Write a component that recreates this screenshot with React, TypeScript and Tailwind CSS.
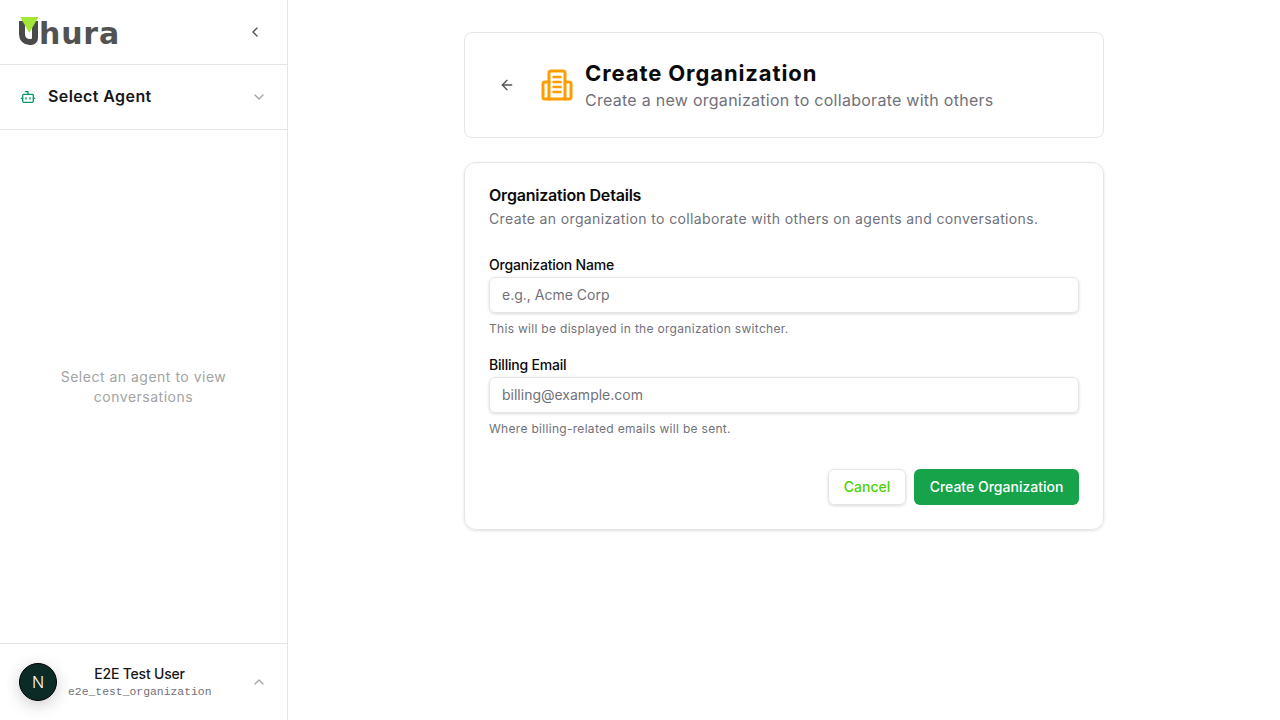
import { ArrowLeft, Bot, ChevronDown, ChevronLeft, ChevronUp } from 'lucide-react'

const font = { fontFamily: 'Inter, "Liberation Sans", sans-serif' }

const Logo = () => (
  <div className="mb-[3px] flex items-end">
    <svg width="21" height="28" viewBox="0 0 21 28" fill="none" className="shrink-0">
      <path d="M4 4v13.500a7.500 7.500 0 0 0 7.500 7.500h1.500a4 4 0 0 0 4-4V4" stroke="#4a4a4a" strokeWidth="6" />
      <path d="M2.500 0.800q0-0.800 0.800-0.800h16.400q0.800 0 0.400 0.700l-8.300 14.300q-0.500 0.800-1 0z" fill="#a3e635" />
    </svg>
    <span
      className="translate-y-[3px] text-[30px] leading-[28px] font-bold tracking-[0.8px] text-[#525252]"
      style={{ fontFamily: '"DejaVu Sans", sans-serif' }}
    >
      hura
    </span>
  </div>
)

const Field = ({ label, placeholder, hint }: { label: string; placeholder: string; hint: string }) => (
  <div>
    <label className="block text-sm leading-5 font-medium tracking-[-0.2px] text-[#0a0a0a]">{label}</label>
    <input
      placeholder={placeholder}
      className="mt-0.5 h-9 w-full rounded-md border border-[#e5e5e5] px-3 pb-px text-sm text-[#0a0a0a] shadow-[0_1px_3px_rgba(0,0,0,0.15)] outline-none placeholder:text-[#71717a]"
    />
    <p className="mt-2 text-xs leading-4 tracking-[0.3px] text-[#71717a]">{hint}</p>
  </div>
)

export default function App() {
  return (
    <div className="flex h-[720px] w-[1280px] overflow-hidden bg-white" style={font}>
      {/* Sidebar */}
      <aside className="flex w-[288px] shrink-0 flex-col border-r border-[#e5e5e5]">
        <div className="flex h-[65px] items-center justify-between border-b border-[#e5e5e5] pr-6 pl-[18px]">
          <Logo />
          <ChevronLeft size={16} className="text-[#525252]" />
        </div>
        <div className="flex h-[65px] items-center border-b border-[#e5e5e5] pr-5 pl-5">
          <Bot size={16} className="text-[#059669]" />
          <span className="ml-3 -translate-y-px flex-1 text-base font-semibold tracking-[0.4px] text-[#171717]">Select Agent</span>
          <ChevronDown size={16} className="text-[#a3a3a3]" />
        </div>
        <div className="flex flex-1 items-center justify-center px-12 text-center text-sm leading-5 tracking-[0.5px] text-[#a3a3a3]">
          Select an agent to view conversations
        </div>
        <div className="flex h-[77px] items-center border-t border-[#e5e5e5] pr-5 pl-[19px]">
          <div className="flex size-[38px] items-center justify-center rounded-full border border-black bg-[#0d2b26] text-base font-light text-white shadow-[0_4px_16px_rgba(0,0,0,0.2)]">
            N
          </div>
          <div className="ml-[11px] w-[143px] text-center">
            <div className="text-sm leading-[18px] font-medium tracking-[-0.2px] text-[#171717]">E2E Test User</div>
            <div className="mt-px text-[11.4px] leading-4 text-[#71717a]" style={{ fontFamily: '"Liberation Mono", monospace' }}>
              e2e_test_organization
            </div>
          </div>
          <ChevronUp size={16} className="ml-auto text-[#a3a3a3]" />
        </div>
      </aside>

      {/* Main */}
      <main className="flex flex-1 flex-col items-center pt-8">
        <div className="flex h-[106px] w-[640px] items-center rounded-lg border border-[#e5e5e5] pl-[34px]">
          <ArrowLeft size={16} className="text-[#525252]" />
          <svg width="32" height="32" viewBox="0 0 32 32" fill="none" stroke="#ff9d00" strokeWidth="3" strokeLinecap="round" strokeLinejoin="round" className="ml-[26px]">
            <path d="M8 30V4a2 2 0 0 1 2-2h12a2 2 0 0 1 2 2v26Z" />
            <path d="M8 13H4a2 2 0 0 0-2 2v13a2 2 0 0 0 2 2h4" />
            <path d="M24 13h4a2 2 0 0 1 2 2v13a2 2 0 0 1-2 2h-4" />
            <path d="M12.500 8h7M12.500 13h7M12.500 18h7M12.500 23h7" strokeWidth="2.500" />
          </svg>
          <div className="ml-3">
            <h1 className="text-[22px] leading-7 font-bold tracking-[0.9px] text-[#0a0a0a]">Create Organization</h1>
            <p className="mt-px text-base leading-6 tracking-[0.27px] text-[#71717a]">Create a new organization to collaborate with others</p>
          </div>
        </div>

        <div className="mt-6 h-[368px] w-[640px] rounded-xl border border-[#e5e5e5] px-6 pt-[22px] shadow-[0_1px_3px_rgba(0,0,0,0.12)]">
          <h2 className="text-base leading-5 font-semibold tracking-[-0.2px] text-[#0a0a0a]">Organization Details</h2>
          <p className="mt-1 text-sm leading-5 tracking-[0.37px] text-[#71717a]">
            Create an organization to collaborate with others on agents and conversations.
          </p>
          <div className="mt-[26px] flex flex-col gap-[18px]">
            <Field label="Organization Name" placeholder="e.g., Acme Corp" hint="This will be displayed in the organization switcher." />
            <Field label="Billing Email" placeholder="billing@example.com" hint="Where billing-related emails will be sent." />
          </div>
          <div className="mt-8 flex justify-end gap-2">
            <button className="h-9 w-[78px] rounded-md border border-[#e5e5e5] text-sm font-medium text-[#4fd000] shadow-[0_1px_3px_rgba(0,0,0,0.15)]">
              Cancel
            </button>
            <button className="h-9 w-[165px] rounded-md bg-[#16a34a] text-sm font-medium text-white">
              Create Organization
            </button>
          </div>
        </div>
      </main>
    </div>
  )
}
